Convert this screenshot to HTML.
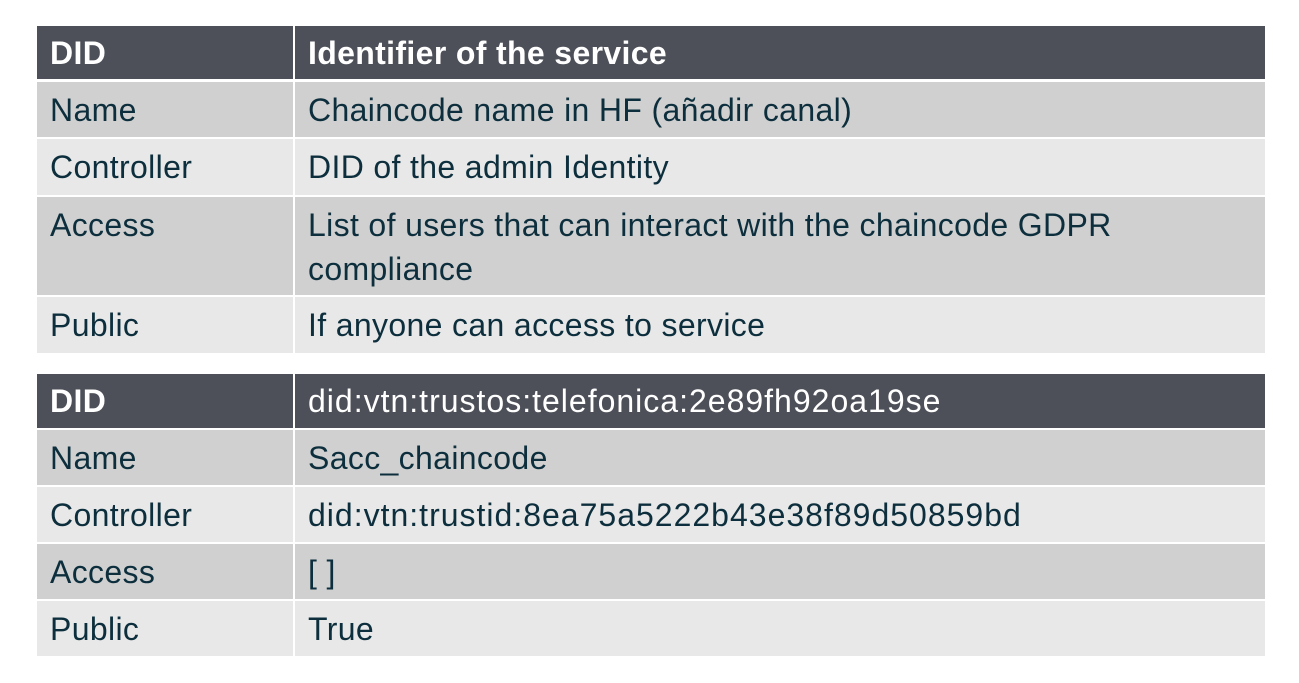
<!DOCTYPE html>
<html><head><style>
body{margin:0;width:1299px;height:683px;background:#fff;position:relative;font-family:"Liberation Sans",sans-serif;overflow:hidden}
.r{position:absolute;left:37px;width:1228px}
.c{position:absolute;top:0;bottom:0;box-sizing:border-box;padding-left:13px;font-size:32px;letter-spacing:0.35px;color:#0d2f3d;line-height:44px;white-space:nowrap}
.a{left:0;width:256px}
.b{left:258px;width:970px}
.h .c{background:#4d5059;color:#fff;font-weight:bold;display:flex;align-items:center}
.h .b.n{font-weight:normal}
.d .c{background:#d0d0d0;display:flex;align-items:center}
.l .c{background:#e8e8e8;display:flex;align-items:center}
.m{letter-spacing:1.0px}
</style></head><body>
<div class="r h" style="top:26px;height:53px"><div class="c a">DID</div><div class="c b">Identifier of the service</div></div>
<div class="r d" style="top:82px;height:55px"><div class="c a">Name</div><div class="c b">Chaincode name in HF (añadir canal)</div></div>
<div class="r l" style="top:139px;height:56px"><div class="c a">Controller</div><div class="c b">DID of the admin Identity</div></div>
<div class="r d" style="top:197px;height:98px"><div class="c a" style="align-items:flex-start;padding-top:6px">Access</div><div class="c b" style="align-items:flex-start;padding-top:6px">List of users that can interact with the chaincode GDPR<br>compliance</div></div>
<div class="r l" style="top:297px;height:56px"><div class="c a">Public</div><div class="c b">If anyone can access to service</div></div>

<div class="r h" style="top:374px;height:54px"><div class="c a">DID</div><div class="c b n m">did:vtn:trustos:telefonica:2e89fh92oa19se</div></div>
<div class="r d" style="top:430px;height:55px"><div class="c a">Name</div><div class="c b">Sacc_chaincode</div></div>
<div class="r l" style="top:487px;height:55px"><div class="c a">Controller</div><div class="c b m">did:vtn:trustid:8ea75a5222b43e38f89d50859bd</div></div>
<div class="r d" style="top:544px;height:55px"><div class="c a">Access</div><div class="c b">[ ]</div></div>
<div class="r l" style="top:601px;height:55px"><div class="c a">Public</div><div class="c b">True</div></div>
</body></html>
